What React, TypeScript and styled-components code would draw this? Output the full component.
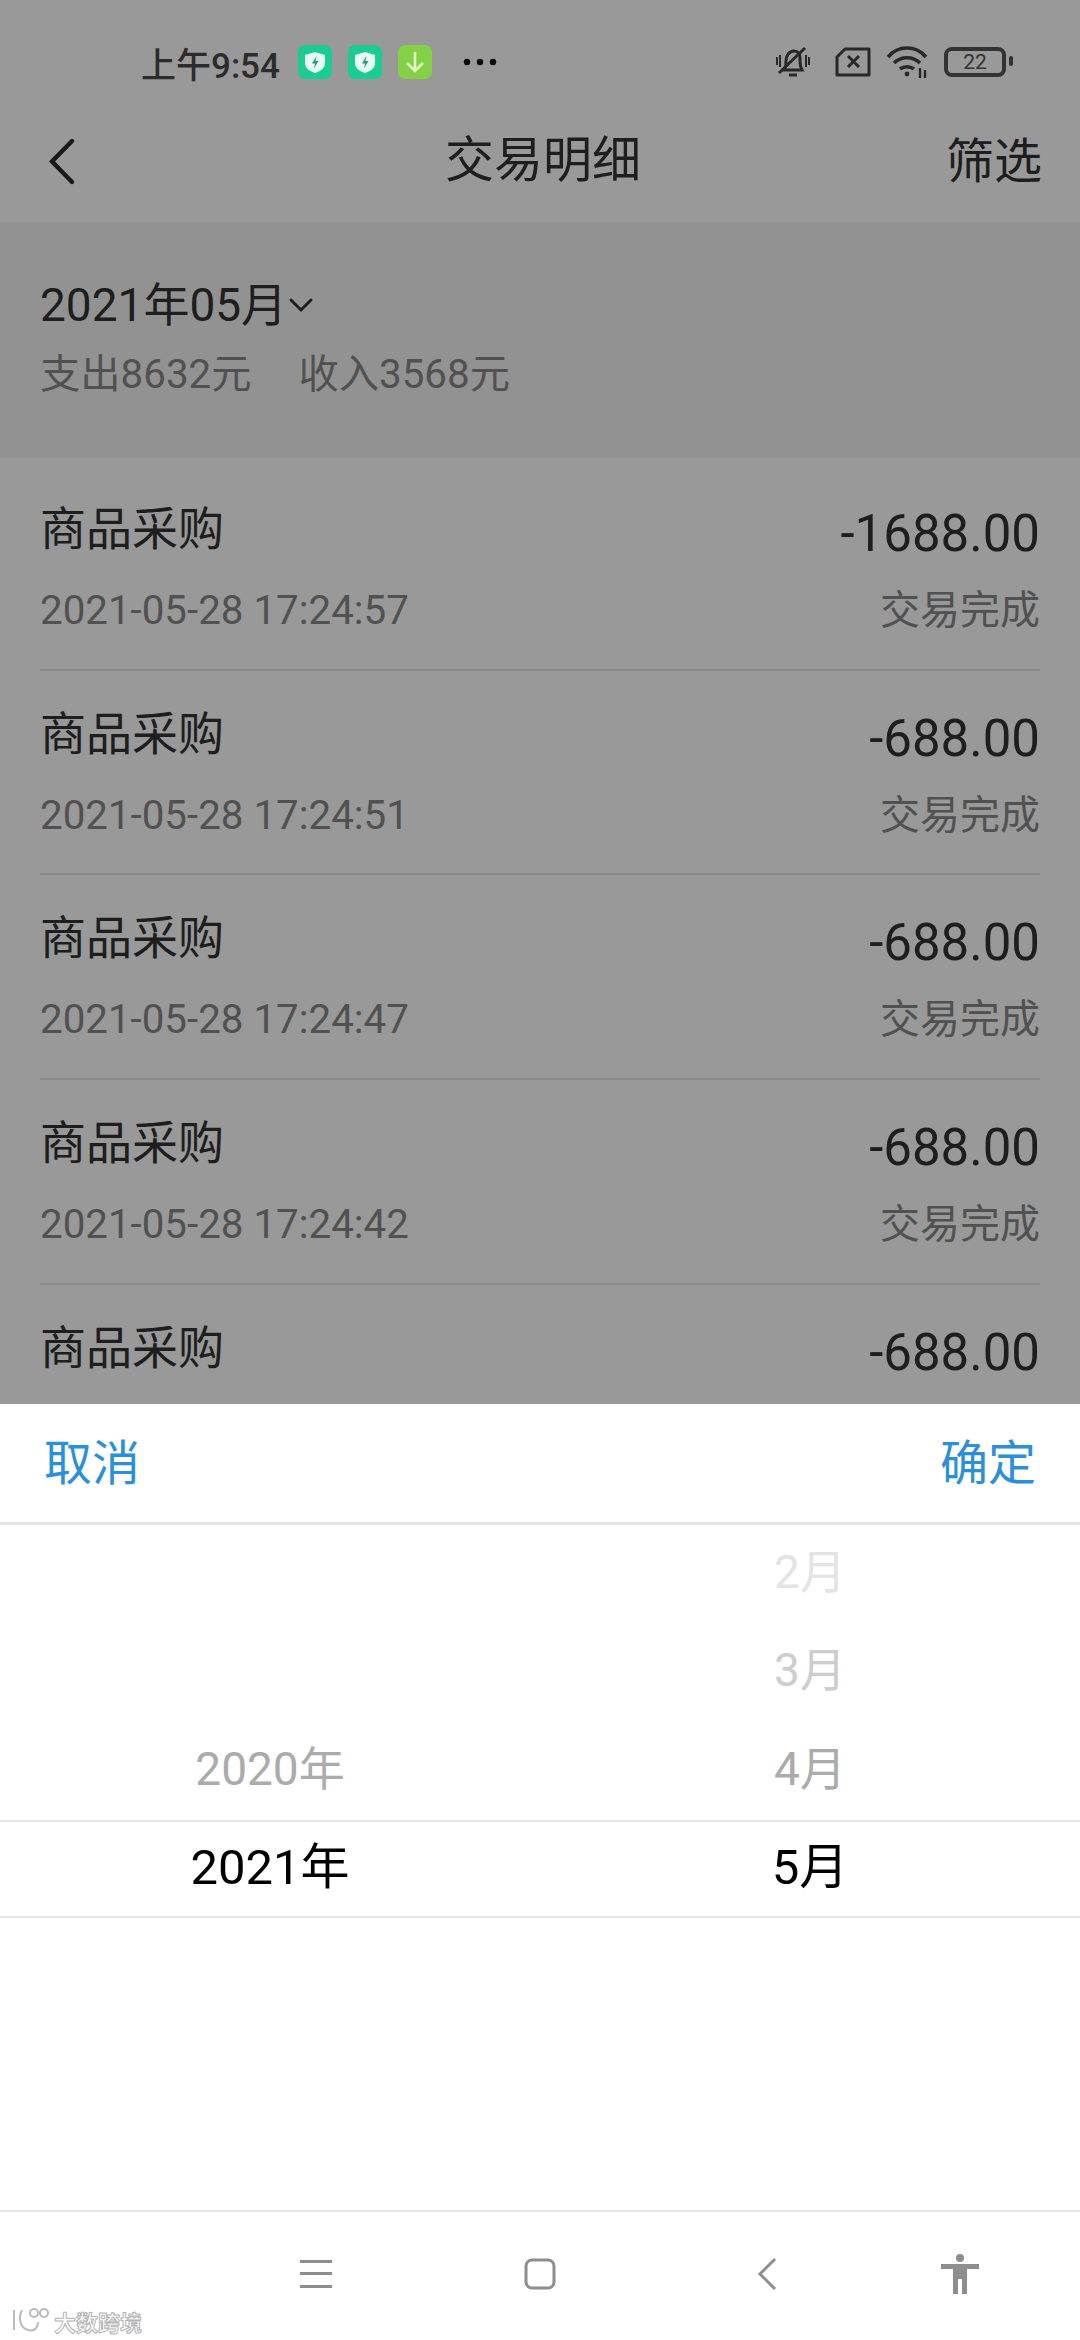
import styled, { createGlobalStyle } from 'styled-components';

const FONT = `Roboto, "Noto Sans CJK SC", sans-serif`;

const GlobalStyle = createGlobalStyle`
  html, body {
    margin: 0;
    padding: 0;
    background: #fff;
  }
  * {
    box-sizing: border-box;
  }
`;

const Phone = styled.div`
  position: relative;
  width: 1080px;
  height: 2340px;
  overflow: hidden;
  background: #fff;
  font-family: ${FONT};
`;

const StatusBar = styled.div`
  display: flex;
  align-items: center;
  height: 124px;
  padding: 0 68px 0 141px;
`;

const Clock = styled.span`
  font-size: 35px;
  font-weight: 500;
  color: #4a4a4a;
  margin-right: 18px;
`;

// app notification icons stay bright above the dimming mask in the reference
const StatusApp = styled.svg`
  position: relative;
  z-index: 1;
  width: 34px;
  height: 34px;
  margin-right: 16px;
  flex: none;
`;

const Dots = styled.svg`
  width: 36px;
  height: 10px;
  margin-left: 14px;
`;

const StatusRight = styled.div`
  display: flex;
  align-items: center;
  margin-left: auto;
`;

const StatusIcon = styled.svg<{ $gap: number }>`
  flex: none;
  margin-right: ${({ $gap }) => $gap}px;
`;

const Battery = styled.div`
  position: relative;
  width: 62px;
  height: 30px;
  border: 4px solid #555;
  border-radius: 8px;
  display: flex;
  align-items: center;
  justify-content: center;
  font-size: 21px;
  line-height: 1;
  color: #555;
  margin-right: 6px;
  &::after {
    content: '';
    position: absolute;
    right: -11px;
    top: 5px;
    width: 4px;
    height: 10px;
    border-radius: 2px;
    background: #555;
  }
`;

const NavBar = styled.div`
  display: grid;
  grid-template-columns: 1fr auto 1fr;
  align-items: center;
  height: 98px;
  padding: 0 38px 24px 48px;
`;

const NavTitle = styled.span`
  font-size: 49px;
  color: #333;
  margin: -12px 4px 0 0;
`;

const NavAction = styled.span`
  font-size: 48px;
  color: #333;
  justify-self: end;
  margin-top: -8px;
`;

const Summary = styled.div`
  height: 236px;
  background: #f3f3f3;
  padding: 53px 40px 0;
`;

const MonthLine = styled.div`
  display: flex;
  align-items: center;
  font-size: 46px;
  line-height: 60px;
  color: #333;
`;

const Totals = styled.div`
  display: flex;
  gap: 47px;
  font-size: 40.3px;
  line-height: 60px;
  margin-top: 10px;
  color: #888;
`;

const List = styled.div`
  padding: 8px 40px 0;
`;

const Row = styled.div`
  height: 204.7px;
  padding-top: 25px;
  border-bottom: 2px solid #e6e6e6;
`;

const RowLine = styled.div`
  display: flex;
  align-items: center;
  justify-content: space-between;
`;

const RowName = styled.span`
  font-size: 46px;
  line-height: 72px;
  color: #333;
  margin-top: -3px;
`;

const RowAmount = styled.span`
  font-size: 51px;
  line-height: 72px;
  color: #333;
  margin-top: 7px;
`;

const RowDate = styled.span`
  font-size: 40.3px;
  line-height: 52px;
  color: #888;
  margin-top: 15px;
`;

const RowState = styled.span`
  font-size: 40px;
  line-height: 52px;
  color: #888;
  margin-top: 15px;
`;

const Mask = styled.div`
  position: absolute;
  inset: 0;
  background: rgba(0, 0, 0, 0.4);
`;

const Sheet = styled.div`
  position: absolute;
  left: 0;
  right: 0;
  top: 1404px;
  bottom: 0;
  background: #fff;
  display: flex;
  flex-direction: column;
`;

const SheetHead = styled.div`
  display: flex;
  align-items: center;
  justify-content: space-between;
  height: 121px;
  padding: 0 44px 8px;
  border-bottom: 3px solid #e5e5e5;
`;

const SheetAction = styled.span`
  font-size: 48px;
  color: #2b90d9;
`;

const Picker = styled.div`
  flex: 1;
  display: flex;
  flex-direction: column;
`;

const PickerRow = styled.div<{ $selected?: boolean }>`
  display: grid;
  grid-template-columns: 1fr 1fr;
  align-items: center;
  height: ${({ $selected }) => ($selected ? '98px' : '98.3px')};
  ${({ $selected }) => $selected && 'border-top: 2px solid #e5e5e5; border-bottom: 2px solid #e5e5e5;'}
`;

const PickerCell = styled.span<{ $shade: string; $selected?: boolean }>`
  text-align: center;
  font-size: ${({ $selected }) => ($selected ? '49px' : '46px')};
  line-height: 60px;
  padding-bottom: ${({ $selected }) => ($selected ? '2px' : '4px')};
  color: ${({ $shade }) => $shade};
`;

const BottomNav = styled.div`
  display: grid;
  grid-template-columns: 224px 224px 224px 168px;
  align-items: center;
  height: 130px;
  padding: 0 0 4px 204px;
  border-top: 2px solid #e5e5e5;
`;

const NavSlot = styled.div`
  display: flex;
  justify-content: center;
`;

const BackIcon = styled.svg`
  margin-left: 6px;
`;

const Watermark = styled.div`
  position: absolute;
  left: 10px;
  bottom: 3px;
  display: flex;
  align-items: center;
  gap: 4px;
  font-size: 22px;
  font-weight: 700;
  color: #fff;
  -webkit-text-stroke: 1px #b4b4b4;
`;

const Shield = ({ id }: { id: string }) => (
  <StatusApp viewBox="0 0 34 34">
    <defs>
      <linearGradient id={id} x1="0" y1="0" x2="1" y2="1">
        <stop offset="0" stopColor="#1fc98f" />
        <stop offset="1" stopColor="#17cf95" />
      </linearGradient>
    </defs>
    <rect width="34" height="34" rx="7" fill={`url(#${id})`} />
    <path d="M17 7l10 3v8c0 5-4 8-10 10-6-2-10-5-10-10v-8z" fill="#e6fbf3" />
    <path d="M18.5 11l-4.5 7.5h3l-1 5 4.5-7.5h-3z" fill="#2a9c78" />
  </StatusApp>
);

// the fifth row's second line sits behind the sheet, so it is left out
const rows = [
  { amount: '-1688.00', date: '2021-05-28 17:24:57' },
  { amount: '-688.00', date: '2021-05-28 17:24:51' },
  { amount: '-688.00', date: '2021-05-28 17:24:47' },
  { amount: '-688.00', date: '2021-05-28 17:24:42' },
  { amount: '-688.00', date: '' },
];

const pickerRows = [
  { year: '', month: '2月', shade: '#e4e4e4' },
  { year: '', month: '3月', shade: '#cdcdcd' },
  { year: '2020年', month: '4月', shade: '#ababab' },
];

export default function App() {
  return (
    <Phone>
      <GlobalStyle />
      <StatusBar>
        <Clock>上午9:54</Clock>
        <Shield id="shieldA" />
        <Shield id="shieldB" />
        <StatusApp viewBox="0 0 34 34">
          <rect width="34" height="34" rx="7" fill="#84d146" />
          <path d="M17 7v19M9 18l8 8 8-8" fill="none" stroke="#e2f7c4" strokeWidth="2.6" />
        </StatusApp>
        <Dots viewBox="0 0 36 10">
          <circle cx="5" cy="5" r="3.2" fill="#111" />
          <circle cx="18" cy="5" r="3.2" fill="#111" />
          <circle cx="31" cy="5" r="3.2" fill="#111" />
        </Dots>
        <StatusRight>
          <StatusIcon $gap={25} width="34" height="34" viewBox="0 0 34 34" fill="none" stroke="#444" strokeWidth="3">
            <path d="M8 25c2-2 2-5 2-9 0-5 3-10 8-10 4 0 6 3 6 7v4c0 4 1 6 2 8z" />
            <path d="M13 30h8" />
            <path d="M3 28L29 3" />
            <path d="M1 12v8M4 10v12M30 10v12M33 12v8" strokeWidth="2" />
          </StatusIcon>
          <StatusIcon $gap={15} width="36" height="30" viewBox="0 0 36 30" fill="none" stroke="#444" strokeWidth="3">
            <path d="M10 2h24v26H2V10z" strokeLinejoin="round" />
            <path d="M13 9l11 11M24 9L13 20" />
          </StatusIcon>
          <StatusIcon $gap={16} width="42" height="34" viewBox="0 0 42 34" fill="none" stroke="#444" strokeWidth="3.6">
            <path d="M2 12c10-12 28-12 38 0" />
            <path d="M8 18c7-7 19-7 26 0" />
            <path d="M14 24c4-3 10-3 14 0" />
            <circle cx="21" cy="29" r="2.4" fill="#444" stroke="none" />
            <path d="M34 23v10M39 25v8" strokeWidth="2.4" />
          </StatusIcon>
          <Battery>22</Battery>
        </StatusRight>
      </StatusBar>
      <NavBar>
        <svg width="27" height="47" viewBox="0 0 27 47" fill="none" stroke="#2a2a2a" strokeWidth="4.4" strokeLinecap="round">
          <path d="M24 3L4 23.5 24 44" />
        </svg>
        <NavTitle>交易明细</NavTitle>
        <NavAction>筛选</NavAction>
      </NavBar>
      <Summary>
        <MonthLine>
          2021年05月
          <svg width="28" height="16" viewBox="0 0 28 16" fill="none" stroke="#333" strokeWidth="3" strokeLinecap="round">
            <path d="M4 3l10 10 10-10" />
          </svg>
        </MonthLine>
        <Totals>
          <span>支出8632元</span>
          <span>收入3568元</span>
        </Totals>
      </Summary>
      <List>
        {rows.map((row, i) => (
          <Row key={i}>
            <RowLine>
              <RowName>商品采购</RowName>
              <RowAmount>{row.amount}</RowAmount>
            </RowLine>
            {row.date && (
              <RowLine>
                <RowDate>{row.date}</RowDate>
                <RowState>交易完成</RowState>
              </RowLine>
            )}
          </Row>
        ))}
      </List>
      <Mask />
      <Sheet>
        <SheetHead>
          <SheetAction>取消</SheetAction>
          <SheetAction>确定</SheetAction>
        </SheetHead>
        <Picker>
          {pickerRows.map((row) => (
            <PickerRow key={row.month}>
              <PickerCell $shade={row.shade}>{row.year}</PickerCell>
              <PickerCell $shade={row.shade}>{row.month}</PickerCell>
            </PickerRow>
          ))}
          <PickerRow $selected>
            <PickerCell $shade="#000" $selected>2021年</PickerCell>
            <PickerCell $shade="#000" $selected>5月</PickerCell>
          </PickerRow>
        </Picker>
        <BottomNav>
          <NavSlot>
            <svg width="32" height="30" viewBox="0 0 32 30" fill="#8e8e8e">
              <rect y="1" width="32" height="3" />
              <rect y="13" width="32" height="3" />
              <rect y="26" width="32" height="3" />
            </svg>
          </NavSlot>
          <NavSlot>
            <svg width="32" height="32" viewBox="0 0 32 32" fill="none" stroke="#8e8e8e" strokeWidth="3">
              <rect x="2" y="2" width="28" height="28" rx="6" />
            </svg>
          </NavSlot>
          <NavSlot>
            <BackIcon width="20" height="32" viewBox="0 0 20 32" fill="none" stroke="#8e8e8e" strokeWidth="3">
              <path d="M18 1L3 16l15 15" />
            </BackIcon>
          </NavSlot>
          <NavSlot>
            <svg width="38" height="40" viewBox="0 0 38 40" fill="#8e8e8e">
              <circle cx="19" cy="4" r="4" />
              <path d="M0 10h38v5H26v25h-5V25h-4v15h-5V15H0z" />
            </svg>
          </NavSlot>
        </BottomNav>
      </Sheet>
      <Watermark>
        <svg width="40" height="30" viewBox="0 0 40 30" fill="none" stroke="#bbb" strokeWidth="2">
          <path d="M4 4v20M12 4c-4 8-2 18 6 20s10-4 10-8" />
          <circle cx="24" cy="7" r="4" />
          <circle cx="34" cy="7" r="4" />
        </svg>
        <span>大数跨境</span>
      </Watermark>
    </Phone>
  );
}
